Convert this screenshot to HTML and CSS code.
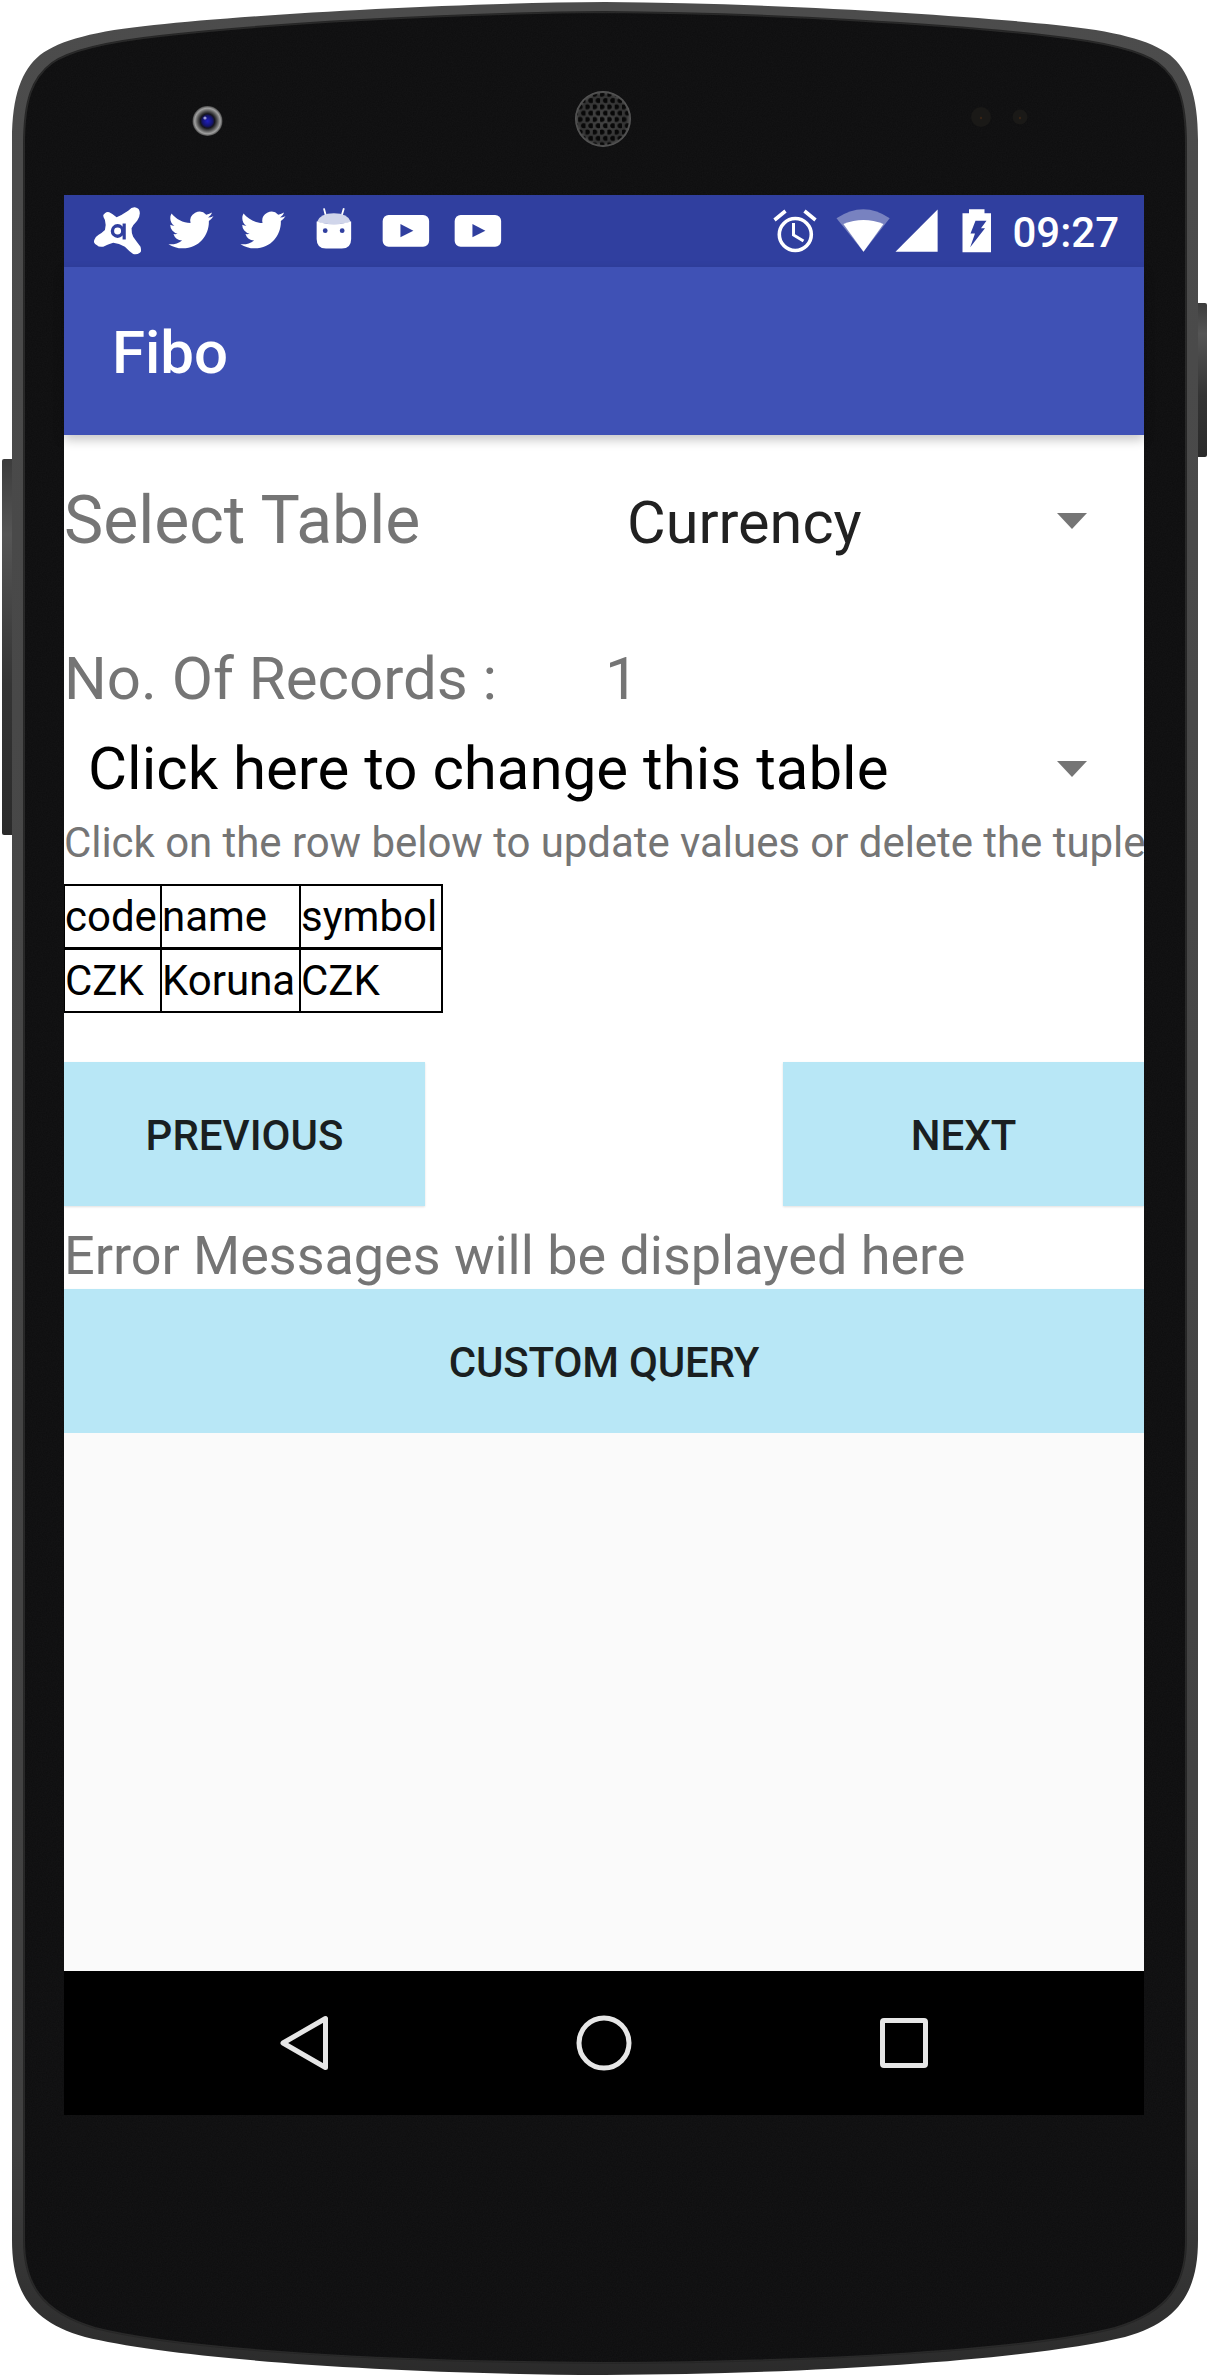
FILE: index.html
```html
<!DOCTYPE html>
<html lang="en">
<head>
    <meta charset="UTF-8">
    <meta name="viewport" content="width=device-width, initial-scale=1.0">
    <title>Fibo</title>
    <link rel="stylesheet" href="styles.css">
</head>
<body>
    <div class="device">
        <!-- phone body, sits behind the screen -->
        <svg class="device-body" width="1210" height="2375" viewBox="0 0 1210 2375">
            <defs>
                <linearGradient id="band" x1="0" y1="0" x2="0" y2="1">
                    <stop offset="0" stop-color="#4c4c4c"/>
                    <stop offset="0.9" stop-color="#404040"/>
                    <stop offset="1" stop-color="#2b2b2b"/>
                </linearGradient>
                <linearGradient id="sideKey" x1="0" y1="0" x2="0" y2="1">
                    <stop offset="0" stop-color="#3c3c3c"/>
                    <stop offset="0.2" stop-color="#555"/>
                    <stop offset="0.6" stop-color="#343434"/>
                    <stop offset="1" stop-color="#2a2a2a"/>
                </linearGradient>
                <radialGradient id="lens" cx="0.5" cy="0.5" r="0.5">
                    <stop offset="0" stop-color="#2020c0"/>
                    <stop offset="0.35" stop-color="#14146a"/>
                    <stop offset="0.48" stop-color="#15151c"/>
                    <stop offset="0.66" stop-color="#555"/>
                    <stop offset="0.85" stop-color="#a0a0a0"/>
                    <stop offset="1" stop-color="#4a4a4a"/>
                </radialGradient>
                <radialGradient id="grill" cx="0.5" cy="0.5" r="0.5">
                    <stop offset="0" stop-color="#454545"/>
                    <stop offset="0.85" stop-color="#333"/>
                    <stop offset="1" stop-color="#5a5a5a"/>
                </radialGradient>
                <pattern id="holes" x="1.5" y="3" width="7.3" height="12.6" patternUnits="userSpaceOnUse">
                    <circle cx="1.8" cy="3" r="2.6" fill="#080808"/>
                    <circle cx="5.45" cy="9.3" r="2.6" fill="#080808"/>
                </pattern>
                <filter id="grain" x="0" y="0" width="1" height="1">
                    <feTurbulence type="fractalNoise" baseFrequency="0.8" numOctaves="2"/>
                    <feColorMatrix values="0 0 0 0 1  0 0 0 0 1  0 0 0 0 1  0 0 0 0.03 0"/>
                    <feComposite in2="SourceGraphic" operator="in"/>
                </filter>
            </defs>
            <rect x="2" y="459" width="12" height="376" rx="2" fill="url(#sideKey)"/>
            <rect x="1196" y="303" width="11" height="154" rx="2" fill="url(#sideKey)"/>
            <path fill="url(#band)" d="M605 2 C440 3 250 15 154 25 C95 31 60 40 40 55 C22 70 12 95 12 140 V2240 C12 2290 30 2322 85 2337 C170 2358 380 2374 605 2375 C830 2374 1040 2358 1125 2337 C1180 2322 1198 2290 1198 2240 V140 C1198 95 1188 70 1170 55 C1150 40 1115 31 1056 25 C960 15 770 3 605 2Z"/>
            <path id="front" fill="#0d0d0e" stroke="#262626" stroke-width="2" d="M605 12 C440 13 255 25 160 36 C105 42 70 50 52 63 C32 78 24 100 24 145 V2240 C24 2285 42 2312 95 2328 C180 2350 390 2362 605 2363 C820 2362 1030 2350 1115 2328 C1168 2312 1186 2285 1186 2240 V145 C1186 100 1178 78 1158 63 C1140 50 1105 42 1050 36 C955 25 770 13 605 12Z"/>
            <path fill="#000" filter="url(#grain)" d="M605 12 C440 13 255 25 160 36 C105 42 70 50 52 63 C32 78 24 100 24 145 V2240 C24 2285 42 2312 95 2328 C180 2350 390 2362 605 2363 C820 2362 1030 2350 1115 2328 C1168 2312 1186 2285 1186 2240 V145 C1186 100 1178 78 1158 63 C1140 50 1105 42 1050 36 C955 25 770 13 605 12Z"/>
            <circle cx="207.5" cy="121" r="15" fill="url(#lens)"/>
            <circle cx="205" cy="118" r="1.6" fill="#9a9ad8"/>
            <circle cx="603" cy="119" r="28" fill="url(#grill)"/>
            <circle cx="603" cy="119" r="26" fill="url(#holes)"/>
            <circle cx="981" cy="117" r="10" fill="#1a1917"/>
            <circle cx="1020" cy="117" r="7.5" fill="#1a1917"/>
            <circle cx="981" cy="118" r="1.2" fill="#3a2415"/>
            <circle cx="1020" cy="118" r="1.2" fill="#3a2415"/>
        </svg>

        <div class="screen">
            <div class="status-bar">
                <div class="status-left">
                    <svg class="status-icon" viewBox="1 0 72 72">
                        <path fill="#fff" d="M23 18.3 Q25 16.5 27.3 17.3 Q31 19 34.7 22.3 Q40 20 46.3 15.7 Q50 12 53 12.3 Q58 13 58 18.3 Q58 22 55.3 25.7 Q51 30 49.7 33.3 Q49.5 38 51.3 41.7 Q55 47 58.7 51.7 Q60 57 58 57.7 Q55 60 51.3 59 Q47 56 43 51.7 Q37 48 31.3 47.7 Q26 49 21.3 51.7 Q17 52.5 14.7 50 Q11 48 12.3 45 Q13 42 16.3 40 Q20 38 23 35 Q24.5 30 23 25 Q21 22 21.3 20Z"/>
                        <circle cx="35.7" cy="36" r="5.2" fill="none" stroke="#303f9f" stroke-width="3.4"/>
                        <path d="M42.3 28.5 V44.5" stroke="#303f9f" stroke-width="3.2" fill="none"/>
                    </svg>
                    <svg class="status-icon" viewBox="0 0 72 72">
                        <path transform="translate(13.5 12.5) scale(1.88)" fill="#fff" d="M23.953 4.57a10 10 0 0 1-2.825.775 4.958 4.958 0 0 0 2.163-2.723c-.951.555-2.005.959-3.127 1.184a4.92 4.92 0 0 0-8.384 4.482C7.69 8.095 4.067 6.13 1.64 3.162a4.822 4.822 0 0 0-.666 2.475c0 1.71.87 3.213 2.188 4.096a4.904 4.904 0 0 1-2.228-.616v.06a4.923 4.923 0 0 0 3.946 4.827 4.996 4.996 0 0 1-2.212.085 4.936 4.936 0 0 0 4.604 3.417 9.867 9.867 0 0 1-6.102 2.105c-.39 0-.779-.023-1.17-.067a13.995 13.995 0 0 0 7.557 2.209c9.053 0 13.998-7.496 13.998-13.985 0-.21 0-.42-.015-.63A9.935 9.935 0 0 0 24 4.59z"/>
                    </svg>
                    <svg class="status-icon" viewBox="0 0 72 72">
                        <path transform="translate(13.5 12.5) scale(1.88)" fill="#fff" d="M23.953 4.57a10 10 0 0 1-2.825.775 4.958 4.958 0 0 0 2.163-2.723c-.951.555-2.005.959-3.127 1.184a4.92 4.92 0 0 0-8.384 4.482C7.69 8.095 4.067 6.13 1.64 3.162a4.822 4.822 0 0 0-.666 2.475c0 1.71.87 3.213 2.188 4.096a4.904 4.904 0 0 1-2.228-.616v.06a4.923 4.923 0 0 0 3.946 4.827 4.996 4.996 0 0 1-2.212.085 4.936 4.936 0 0 0 4.604 3.417 9.867 9.867 0 0 1-6.102 2.105c-.39 0-.779-.023-1.17-.067a13.995 13.995 0 0 0 7.557 2.209c9.053 0 13.998-7.496 13.998-13.985 0-.21 0-.42-.015-.63A9.935 9.935 0 0 0 24 4.59z"/>
                    </svg>
                    <svg class="status-icon" viewBox="0 0 72 72">
                        <path d="M26 13.3 L28 21 M46 13.3 L43.7 21" stroke="#fff" stroke-width="1.8" fill="none"/>
                        <path fill="#d0d5ea" d="M19 27 Q22 18.3 36 18.3 Q50 18.3 53 27 Q36 32 19 27Z"/>
                        <path fill="#fff" d="M18.7 26.5 Q36 32 53.3 26.5 V44 Q53.3 53.5 44 53.5 H28 Q18.7 53.5 18.7 44Z"/>
                        <circle cx="27.3" cy="35.7" r="2.4" fill="#303f9f"/>
                        <circle cx="44.3" cy="35.7" r="2.4" fill="#303f9f"/>
                    </svg>
                    <svg class="status-icon" viewBox="0 0 72 72">
                        <rect x="12.7" y="20" width="46.6" height="31.7" rx="6" fill="#fff"/>
                        <path d="M30.5 29 L43.5 35.7 L30.5 42.3Z" fill="#303f9f"/>
                    </svg>
                    <svg class="status-icon" viewBox="0 0 72 72">
                        <rect x="12.7" y="20" width="46.6" height="31.7" rx="6" fill="#fff"/>
                        <path d="M30.5 29 L43.5 35.7 L30.5 42.3Z" fill="#303f9f"/>
                    </svg>
                </div>
                <div class="status-right">
                    <svg class="icon-alarm" viewBox="0 0 48 72">
                        <circle cx="24.3" cy="39.5" r="16" fill="none" stroke="#fff" stroke-width="3.6"/>
                        <path d="M3.5 25 L14.5 16 M44.5 25 L33.5 16" stroke="#fff" stroke-width="3.6" fill="none"/>
                        <path d="M22.5 28 V40 L32.5 46" stroke="#fff" stroke-width="3" fill="none"/>
                    </svg>
                    <svg class="icon-wifi" viewBox="0 0 56 72">
                        <path fill="#fff" fill-opacity="0.35" d="M28.5 56.7 L1.5 23.3 Q28.5 5.3 54.7 23.3Z"/>
                        <path fill="#fff" d="M28.5 56.7 L8.4 29 Q28.5 21 48.5 29Z"/>
                    </svg>
                    <svg class="icon-signal" viewBox="0 0 44 72">
                        <path fill="#fff" d="M0.5 56.7 H42.6 V14.5Z"/>
                    </svg>
                    <svg class="icon-battery" viewBox="0 0 32 72">
                        <path fill="#fff" d="M8 14.3 H23.5 V18.3 H30 V57.3 H1.5 V18.3 H8Z"/>
                        <path fill="#303f9f" d="M14.5 25.7 H25.5 L20 33.3 H24 L9.2 52.3 L14 38.5 H9.5Z"/>
                    </svg>
                    <span class="status-time">09:27</span>
                </div>
            </div>

            <header class="app-bar">Fibo</header>

            <main class="content">
                <div class="table-select">
                    <span class="select-label">Select Table</span>
                    <span class="select-value">Currency</span>
                    <span class="spinner-arrow"></span>
                </div>
                <div class="records">
                    <span class="records-label">No. Of Records :</span>
                    <span>1</span>
                </div>
                <div class="change-table">
                    <span class="change-value">Click here to change this table</span>
                    <span class="spinner-arrow"></span>
                </div>
                <p class="hint">Click on the row below to update values or delete the tuple</p>
                <table class="data-table">
                    <tr><td class="col-code">code</td><td class="col-name">name</td><td class="col-symbol">symbol</td></tr>
                    <tr><td>CZK</td><td>Koruna</td><td>CZK</td></tr>
                </table>
                <div class="pager">
                    <button class="btn btn-half">Previous</button>
                    <button class="btn btn-half">Next</button>
                </div>
                <p class="error-line">Error Messages will be displayed here</p>
                <button class="btn btn-wide">Custom Query</button>
            </main>

            <div class="empty-area"></div>

            <nav class="nav-bar">
                <svg class="nav-icon" viewBox="0 0 72 72">
                    <path d="M15 36 L57.5 11.5 V60.5Z" fill="none" stroke="#e6e6e6" stroke-width="5" stroke-linejoin="round"/>
                </svg>
                <svg class="nav-icon" viewBox="0 0 72 72">
                    <circle cx="36" cy="36" r="25" fill="none" stroke="#e6e6e6" stroke-width="5"/>
                </svg>
                <svg class="nav-icon" viewBox="0 0 72 72">
                    <rect x="14.5" y="13.5" width="43" height="45" rx="1.5" fill="none" stroke="#e6e6e6" stroke-width="5"/>
                </svg>
            </nav>
        </div>
    </div>
</body>
</html>
```

FILE: styles.css
```css
body {
    margin: 0;
    background-color: white;
    font-family: Roboto, sans-serif;
}

.device {
    position: relative;
    box-sizing: border-box;
    width: 1210px;
    height: 2375px;
    padding: 195px 66px 260px 64px;
}

.device-body {
    position: absolute;
    top: 0;
    left: 0;
}

.screen {
    position: relative;
    display: flex;
    flex-direction: column;
    height: 1920px;
    background-color: #fafafa;
}

.status-bar {
    display: flex;
    justify-content: space-between;
    height: 72px;
    padding: 0 25px 0 19px;
    background-color: #303f9f;
}

.status-left,
.status-right {
    display: flex;
    align-items: center;
}

.status-icon {
    width: 71.8px;
    height: 72px;
}

.icon-alarm {
    width: 48px;
    height: 72px;
}

.icon-wifi {
    width: 56px;
    height: 72px;
    margin-left: 15.5px;
}

.icon-signal {
    width: 44px;
    height: 72px;
    margin-left: 4px;
}

.icon-battery {
    width: 32px;
    height: 72px;
    margin-left: 22.5px;
}

.status-time {
    margin-left: 19px;
    padding-top: 2px;
    color: white;
    font-size: 42px;
    font-weight: 500;
}

.app-bar {
    position: relative;
    z-index: 1;
    height: 168px;
    padding-left: 48px;
    line-height: 172px;
    background-color: #3f51b5;
    color: white;
    font-size: 60px;
    font-weight: 500;
    box-shadow: 0 5px 10px rgba(0,0,0,0.22);
}

.content {
    height: 998px;
    overflow: hidden;
    background-color: white;
}

.table-select {
    display: flex;
    align-items: baseline;
    height: 96px;
    margin-top: 38px;
    line-height: 96px;
}

.select-label {
    width: 563px;
    color: #757575;
    font-size: 66px;
}

.select-value {
    flex: 1;
    color: #212121;
    font-size: 59.4px;
}

.spinner-arrow {
    align-self: center;
    width: 0;
    height: 0;
    margin-right: 57px;
    border-top: 16px solid #757575;
    border-left: 15px solid transparent;
    border-right: 15px solid transparent;
}

.records {
    display: flex;
    height: 72px;
    margin-top: 74px;
    line-height: 72px;
    color: #757575;
    font-size: 60px;
}

.records-label {
    width: 541px;
}

.change-table {
    display: flex;
    align-items: baseline;
    height: 96px;
    margin-top: 6px;
    padding-left: 24px;
    line-height: 96px;
}

.change-value {
    flex: 1;
    color: black;
    font-size: 60px;
}

.hint {
    height: 50px;
    margin: 1px 0 0;
    line-height: 50px;
    color: #757575;
    font-size: 42px;
    letter-spacing: -0.05px;
    white-space: nowrap;
}

.data-table {
    margin: 16px 0 0 -1px;
    border-collapse: collapse;
    table-layout: fixed;
    width: 380px;
    font-size: 42px;
    line-height: 61px;
}

.data-table td {
    padding: 0;
    border: 2px solid black;
}

.data-table tr:first-child td {
    border-bottom-width: 3px;
}

.col-code {
    width: 95px;
}

.col-name {
    width: 137px;
}

.pager {
    display: flex;
    justify-content: space-between;
    margin-top: 49px;
}

.btn {
    display: block;
    height: 144px;
    padding: 2px 0 0;
    border: none;
    background-color: #b8e7f6;
    color: #1a1f21;
    font-family: Roboto, sans-serif;
    font-size: 42px;
    font-weight: 500;
    text-transform: uppercase;
    box-shadow: 0 1px 2px rgba(0,0,0,0.12);
}

.btn-half {
    width: 361px;
}

.btn-wide {
    width: 100%;
    margin-top: 1px;
    letter-spacing: -0.2px;
}

.error-line {
    height: 64px;
    margin: 18px 0 0;
    line-height: 64px;
    color: #757575;
    font-size: 54px;
    letter-spacing: -0.03px;
    white-space: nowrap;
}

.empty-area {
    flex: 1;
}

.nav-bar {
    display: flex;
    justify-content: center;
    align-items: center;
    gap: 228px;
    height: 144px;
    background-color: black;
}

.nav-icon {
    width: 72px;
    height: 72px;
}
```
